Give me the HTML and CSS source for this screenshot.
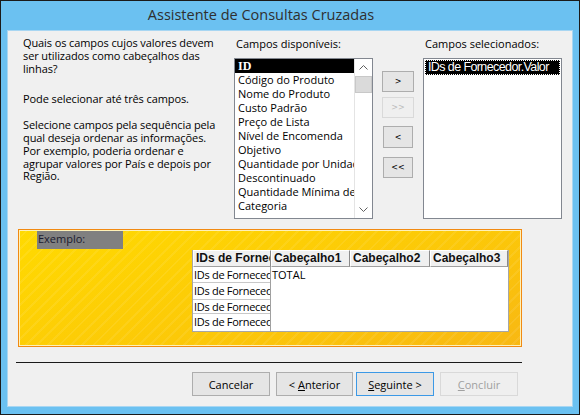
FILE: index.html
```html
<!DOCTYPE html>
<html lang="pt">
<head>
    <meta charset="UTF-8">
    <title>Assistente de Consultas Cruzadas</title>
    <link rel="stylesheet" href="styles.css">
</head>
<body>
<div class="window">
    <div class="titlebar">Assistente de Consultas Cruzadas</div>
    <div class="client">
        <div class="top">
            <div class="intro">
                <p>Quais os campos cujos valores devem<br>ser utilizados como cabeçalhos das<br>linhas?</p>
                <p class="p2">Pode selecionar até três campos.</p>
                <p class="p3">Selecione campos pela sequência pela<br>qual deseja ordenar as informações.<br>Por exemplo, poderia ordenar e<br>agrupar valores por País e depois por<br>Região.</p>
            </div>
            <div class="available">
                <div class="label">Campos disponíveis:</div>
                <div class="pick">
                    <div class="listbox">
                        <ul class="items">
                            <li class="current">ID</li>
                            <li>Código do Produto</li>
                            <li>Nome do Produto</li>
                            <li>Custo Padrão</li>
                            <li>Preço de Lista</li>
                            <li>Nível de Encomenda</li>
                            <li>Objetivo</li>
                            <li>Quantidade por Unidade</li>
                            <li>Descontinuado</li>
                            <li>Quantidade Mínima de Encomenda</li>
                            <li>Categoria</li>
                        </ul>
                        <div class="scrollbar">
                            <div class="sb-btn">
                                <svg width="9" height="5" viewBox="0 0 9 5"><polyline points="0.5,4.5 4.5,0.5 8.5,4.5" fill="none" stroke="#606060" stroke-width="1"/></svg>
                            </div>
                            <div class="sb-thumb"></div>
                            <div class="sb-track"></div>
                            <div class="sb-btn">
                                <svg width="9" height="5" viewBox="0 0 9 5"><polyline points="0.5,0.5 4.5,4.5 8.5,0.5" fill="none" stroke="#606060" stroke-width="1"/></svg>
                            </div>
                        </div>
                    </div>
                    <div class="movers">
                        <button class="mv mv1">&gt;</button>
                        <button class="mv mv2" disabled>&gt;&gt;</button>
                        <button class="mv mv3">&lt;</button>
                        <button class="mv mv4">&lt;&lt;</button>
                    </div>
                </div>
            </div>
            <div class="selected">
                <div class="label">Campos selecionados:</div>
                <div class="listbox right">
                    <div class="sel-item">IDs de Fornecedor.Valor</div>
                </div>
            </div>
        </div>

        <div class="example">
            <div class="ex-label">Exemplo:</div>
            <div class="grid">
                <div class="head">
                    <div class="hc c1">IDs de Fornecedor</div>
                    <div class="hc c2">Cabeçalho1</div>
                    <div class="hc c3">Cabeçalho2</div>
                    <div class="hc c4">Cabeçalho3</div>
                </div>
                <div class="body">
                    <div class="rows">
                        <div class="row r1">IDs de Fornecedor</div>
                        <div class="row r2">IDs de Fornecedor</div>
                        <div class="row r3">IDs de Fornecedor</div>
                        <div class="row r4">IDs de Fornecedor</div>
                    </div>
                    <div class="values">TOTAL</div>
                </div>
            </div>
        </div>

        <div class="rule"></div>

        <div class="actions">
            <button class="btn">Cancelar</button>
            <button class="btn b-prev">&lt; <u>A</u>nterior</button>
            <button class="btn b-next"><u>S</u>eguinte &gt;</button>
            <button class="btn b-done" disabled><u>C</u>oncluir</button>
        </div>
    </div>
</div>
</body>
</html>
```

FILE: styles.css
```css
* {
    box-sizing: border-box;
}

body {
    margin: 0;
    font-family: "Open Sans", "Noto Sans", sans-serif;
    font-size: 11px;
    color: #000;
}

.window {
    width: 580px;
    height: 415px;
    border: 1px solid #1a1a1a;
    background: #6bc1f1;
    padding: 0 6px 7px 6px;
    display: flex;
    flex-direction: column;
}

.titlebar {
    height: 29px;
    padding-right: 58px;
    text-align: center;
    font-size: 14.5px;
    line-height: 28px;
    color: #2f2f2f;
}

.client {
    flex: 1;
    background: #f0f0f0;
    border: 1px solid #a8d6f2;
    display: flex;
    flex-direction: column;
}

/* top part */

.top {
    display: flex;
    padding: 5px 0 0 15px;
    height: 188px;
}

.intro {
    width: 211px;
    padding-top: 1px;
    line-height: 12.8px;
    white-space: nowrap;
    letter-spacing: -0.1px;
}

.intro p {
    margin: 0;
}

.intro .p2 {
    margin-top: 18px;
}

.intro .p3 {
    margin-top: 13px;
}

.label {
    height: 15px;
    line-height: 15px;
    margin-bottom: 7px;
    padding-left: 2px;
}

.pick {
    display: flex;
}

.listbox {
    width: 139px;
    height: 161px;
    background: #fff;
    border: 1px solid #828790;
    display: flex;
    overflow: hidden;
}

.items {
    list-style: none;
    margin: 0;
    padding: 0;
    flex: 1;
    overflow: hidden;
    white-space: nowrap;
}

.items li {
    height: 14px;
    line-height: 14px;
    padding-left: 3px;
}

.items li.current {
    background: #000;
    color: #fff;
    font-family: "Liberation Serif", serif;
    font-weight: bold;
    font-size: 12px;
}

.scrollbar {
    width: 18px;
    display: flex;
    flex-direction: column;
    border-left: 1px solid #e4e4e4;
    background: #fff;
}

.sb-btn {
    height: 17px;
    display: flex;
    align-items: center;
    justify-content: center;
}

.sb-thumb {
    height: 17px;
    background: #dadada;
    border: 1px solid #c8c8c8;
}

.sb-track {
    flex: 1;
}

.movers {
    display: flex;
    flex-direction: column;
    margin-left: 9px;
}

.mv {
    width: 32px;
    height: 21px;
    padding: 0;
    border: 1px solid #adadad;
    background: #e5e5e5;
    font-family: "DejaVu Sans", sans-serif;
    font-size: 8px;
    color: #000;
}

.mv1 {
    margin-top: 13px;
}

.mv2 {
    margin-top: 5px;
    border-color: #d9d9d9;
    background: #efefef;
    color: #bcbcbc;
}

.mv3 {
    width: 30px;
    margin-left: 1px;
    height: 22px;
    margin-top: 8px;
}

.mv4 {
    width: 30px;
    margin-left: 1px;
    margin-top: 9px;
}

.selected {
    margin-left: 9px;
}

.listbox.right {
    display: block;
    padding: 1px 1px 0 1px;
}

.sel-item {
    height: 15px;
    line-height: 13px;
    background: #000;
    color: #fff;
    border: 1px dotted #fff;
    padding-left: 2px;
    font-family: "Liberation Sans", sans-serif;
    font-size: 12.5px;
    letter-spacing: -0.6px;
    white-space: nowrap;
}

/* example */

.example {
    margin: 10px 0 0 10px;
    width: 504px;
    height: 118px;
    border: 1px solid #f18a12;
    box-shadow: inset 0 0 0 1px #fff1b8;
    background:
        repeating-linear-gradient(-45deg, rgba(255, 255, 255, 0) 0 6px, rgba(255, 255, 255, 0.08) 6px 8px),
        linear-gradient(160deg, #ffda00 0%, #fcc908 55%, #f8b813 100%);
    padding: 1px;
}

.ex-label {
    margin-left: 17px;
    width: 86px;
    height: 18px;
    background: #808080;
    color: #1b1b2e;
    padding-left: 1px;
    line-height: 16px;
}

.grid {
    margin: 1px 0 0 172px;
    width: 317px;
    border: 1px solid #a6a6a6;
    border-top: 0;
    background: #fff;
    font-size: 11px;
    white-space: nowrap;
}

.head {
    display: flex;
    height: 17px;
}

.hc {
    height: 17px;
    background: #f0f0f0;
    border-top: 1px solid #fff;
    border-left: 1px solid #fff;
    border-right: 1px solid #8a8a8a;
    border-bottom: 1px solid #a0a0a0;
    font-family: "Liberation Sans", sans-serif;
    font-size: 12px;
    font-weight: bold;
    line-height: 15px;
    padding-left: 2px;
    overflow: hidden;
    color: #111;
}

.c1 { width: 78px; }
.c2 { width: 79px; }
.c3 { width: 80px; }
.c4 { width: 78px; }

.body {
    display: flex;
    height: 64px;
}

.rows {
    width: 78px;
    border-right: 1px solid #a0a0a0;
}

.row {
    border-bottom: 1px solid #c8c8c8;
    line-height: 15px;
    padding-left: 1px;
    overflow: hidden;
    letter-spacing: -0.3px;
}

.row.r1 { height: 16px; }
.row.r2 { height: 17px; }
.row.r3 { height: 14px; line-height: 13px; }
.row.r4 { height: 17px; border-bottom: 0; }

.values {
    flex: 1;
    padding-left: 1px;
    line-height: 15px;
}

/* bottom */

.rule {
    margin: 15px 0 0 8px;
    width: 506px;
    height: 1px;
    background: #1a1a1a;
}

.actions {
    display: flex;
    padding-left: 184px;
    margin-top: 9px;
}

.btn {
    width: 78px;
    height: 24px;
    border: 1px solid #adadad;
    background: #e5e5e5;
    font-family: "Open Sans", "Noto Sans", sans-serif;
    font-size: 11px;
    color: #000;
    padding: 0;
}

.b-prev {
    width: 77px;
    margin-left: 6px;
}

.b-next {
    margin-left: 3px;
    border-color: #3c99e6;
}

.b-done {
    margin-left: 6px;
    border-color: #d9d9d9;
    background: #efefef;
    color: #a0a0a0;
}
```
